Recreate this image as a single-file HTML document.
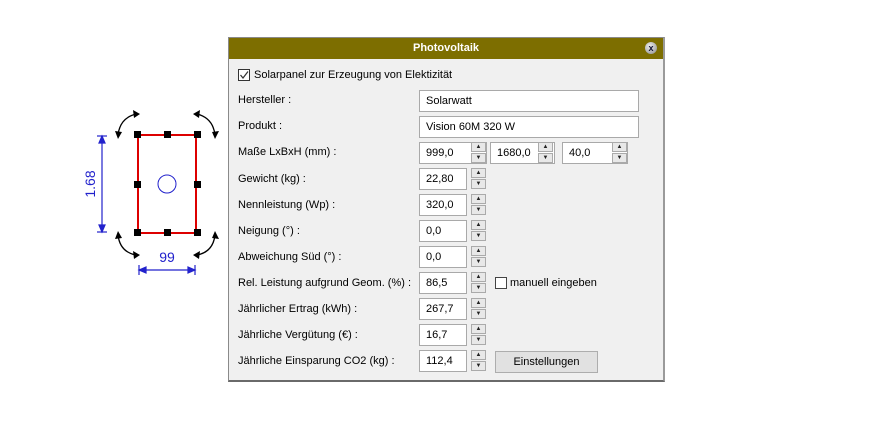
<!DOCTYPE html>
<html><head><meta charset="utf-8"><style>
body{margin:0;width:880px;height:436px;background:#fff;position:relative;overflow:hidden;font-family:"Liberation Sans",sans-serif;font-size:11px;color:#000}
.dlg{position:absolute;left:228px;top:37px;width:434px;height:342px;background:#f0f0f0;border:1px solid #8a8a8a;border-bottom:2px solid #6a6a6a;border-right:2px solid #9a9a9a}
.tb{position:absolute;left:0;top:0;width:434px;height:21px;background:#7d6e00;color:#fff;font-weight:bold;font-size:11px;text-align:center;line-height:21px}
.x{position:absolute;right:6px;top:4px;width:12px;height:12px;border-radius:50%;background:radial-gradient(circle at 40% 35%,#eee,#888);font-size:9px;line-height:12px;color:#113;text-align:center}
.l{position:absolute;left:9px;}
.in{position:absolute;height:20px;border:1px solid #a9a9a9;background:#fff;line-height:20px;padding-left:6px;box-sizing:border-box;height:22px}
.sp{position:absolute;width:15px;height:22px;box-sizing:border-box}
.sp div{height:10px;border:1px solid #aaa;background:#e8e8e8;margin-bottom:1px;font-size:6px;line-height:9px;text-align:center;color:#222;box-sizing:border-box}
.cb{position:absolute;width:12px;height:12px;border:1px solid #333;background:#fff;box-sizing:border-box}
</style></head><body>
<svg style="position:absolute;left:0;top:0" width="230" height="300">
<rect x="138" y="135" width="58" height="98" fill="none" stroke="#d00" stroke-width="2"/>
<g fill="#000">
<rect x="134" y="131" width="7" height="7"/><rect x="164" y="131" width="7" height="7"/><rect x="194" y="131" width="7" height="7"/>
<rect x="134" y="181" width="7" height="7"/><rect x="194" y="181" width="7" height="7"/>
<rect x="134" y="229" width="7" height="7"/><rect x="164" y="229" width="7" height="7"/><rect x="194" y="229" width="7" height="7"/>
</g>
<circle cx="167" cy="184" r="9" fill="none" stroke="#22c" stroke-width="1"/>
<g fill="none" stroke="#000" stroke-width="1.3">
<path d="M118 135 Q120 118 136 114"/><path d="M215 135 Q213 118 197 114"/>
<path d="M118 235 Q120 252 136 255"/><path d="M215 235 Q213 252 197 255"/>
</g>
<g fill="#000">
<path d="M140 114 L133 110 L134 118Z"/><path d="M193 114 L200 110 L199 118Z"/>
<path d="M118 139 L115 131 L122 132Z"/><path d="M215 139 L212 132 L219 131Z"/>
<path d="M118 231 L115 239 L122 238Z"/><path d="M215 231 L212 238 L219 239Z"/>
<path d="M140 255 L133 251 L134 259Z"/><path d="M193 255 L200 251 L199 259Z"/>
</g>
<g stroke="#22c" stroke-width="1.2" fill="#22c">
<line x1="102" y1="136" x2="102" y2="232"/><line x1="97" y1="136" x2="107" y2="136"/><line x1="97" y1="232" x2="107" y2="232"/>
<path d="M102 136 L99 143 L105 143Z"/><path d="M102 232 L99 225 L105 225Z"/>
<line x1="139" y1="270" x2="195" y2="270"/><line x1="139" y1="265" x2="139" y2="275"/><line x1="195" y1="265" x2="195" y2="275"/>
<path d="M139 270 L146 267 L146 273Z"/><path d="M195 270 L188 267 L188 273Z"/>
</g>
<text x="167" y="262" fill="#22c" font-size="14" text-anchor="middle" font-family="Liberation Sans">99</text>
<text transform="translate(95 184) rotate(-90)" fill="#22c" font-size="14" text-anchor="middle" font-family="Liberation Sans">1.68</text>
</svg>
<div class="dlg">
<div class="tb">Photovoltaik<div class="x">x</div></div>
<div class="cb" style="left:9px;top:31px"><svg width="10" height="10" style="position:absolute;left:0;top:0"><path d="M1.5 5 L4 8 L9 1.5" fill="none" stroke="#333" stroke-width="1.2"/></svg></div>
<div class="l" style="left:25px;top:31px">Solarpanel zur Erzeugung von Elektizität</div>
<div class="l" style="top:56px">Hersteller :</div>
<div class="in" style="left:190px;top:52px;width:220px">Solarwatt</div>
<div class="l" style="top:82px">Produkt :</div>
<div class="in" style="left:190px;top:78px;width:220px">Vision 60M 320 W</div>
<div class="l" style="top:108px">Maße LxBxH (mm) :</div>
<div class="in" style="left:190px;top:104px;width:68px">999,0</div><div class="sp" style="left:242px;top:104px"><div>▲</div><div>▼</div></div>
<div class="in" style="left:261px;top:104px;width:65px">1680,0</div><div class="sp" style="left:309px;top:104px"><div>▲</div><div>▼</div></div>
<div class="in" style="left:333px;top:104px;width:66px">40,0</div><div class="sp" style="left:383px;top:104px"><div>▲</div><div>▼</div></div>
<div class="l" style="top:135px">Gewicht (kg) :</div>
<div class="l" style="top:161px">Nennleistung (Wp) :</div>
<div class="l" style="top:187px">Neigung (°) :</div>
<div class="l" style="top:213px">Abweichung Süd (°) :</div>
<div class="l" style="top:239px">Rel. Leistung aufgrund Geom. (%) :</div>
<div class="l" style="top:265px">Jährlicher Ertrag (kWh) :</div>
<div class="l" style="top:291px">Jährliche Vergütung (€) :</div>
<div class="l" style="top:317px">Jährliche Einsparung CO2 (kg) :</div>
<div class="in" style="left:190px;top:130px;width:48px">22,80</div><div class="sp" style="left:242px;top:130px"><div>▲</div><div>▼</div></div>
<div class="in" style="left:190px;top:156px;width:48px">320,0</div><div class="sp" style="left:242px;top:156px"><div>▲</div><div>▼</div></div>
<div class="in" style="left:190px;top:182px;width:48px">0,0</div><div class="sp" style="left:242px;top:182px"><div>▲</div><div>▼</div></div>
<div class="in" style="left:190px;top:208px;width:48px">0,0</div><div class="sp" style="left:242px;top:208px"><div>▲</div><div>▼</div></div>
<div class="in" style="left:190px;top:234px;width:48px">86,5</div><div class="sp" style="left:242px;top:234px"><div>▲</div><div>▼</div></div>
<div class="in" style="left:190px;top:260px;width:48px">267,7</div><div class="sp" style="left:242px;top:260px"><div>▲</div><div>▼</div></div>
<div class="in" style="left:190px;top:286px;width:48px">16,7</div><div class="sp" style="left:242px;top:286px"><div>▲</div><div>▼</div></div>
<div class="in" style="left:190px;top:312px;width:48px">112,4</div><div class="sp" style="left:242px;top:312px"><div>▲</div><div>▼</div></div>
<div class="cb" style="left:266px;top:239px;border-color:#444"></div>
<div class="l" style="left:281px;top:239px">manuell eingeben</div>
<div style="position:absolute;left:266px;top:313px;width:101px;height:20px;border:1px solid #adadad;background:#e1e1e1;text-align:center;line-height:20px">Einstellungen</div>
</div>
</body></html>
